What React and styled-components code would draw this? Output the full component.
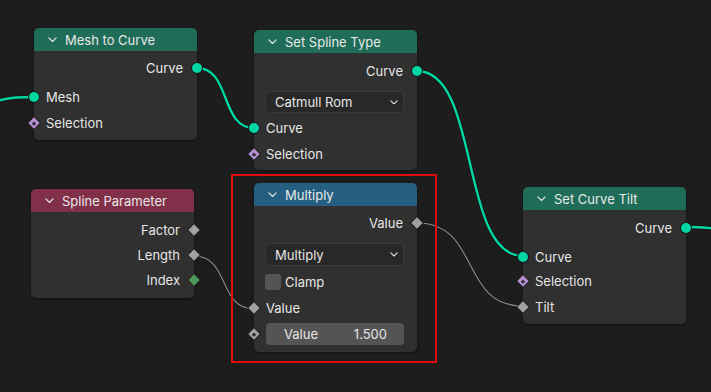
import React from 'react';
import styled, { createGlobalStyle } from 'styled-components';

const GlobalStyle = createGlobalStyle`
  html, body {
    margin: 0;
    padding: 0;
    background: #1d1d1d;
  }
  body {
    font-family: Inter, "Noto Sans", sans-serif;
  }
`;

const Canvas = styled.div`
  position: relative;
  width: 711px;
  height: 392px;
  overflow: hidden;
  background: #1d1d1d;
`;

const Wires = styled.svg`
  position: absolute;
  left: 0;
  top: 0;
`;

const StyledNode = styled.div`
  position: absolute;
  width: 163px;
  background: #303030;
  border-radius: 5px;
  box-shadow: 0 1px 3px rgba(0, 0, 0, 0.45);
  display: flex;
  flex-direction: column;
  padding-bottom: ${(p) => p.$bottom}px;
  color: #e6e6e6;
  font-size: 13px;
`;

const Header = styled.div`
  height: 23px;
  background: ${(p) => p.$color};
  border-radius: 5px 5px 0 0;
  display: flex;
  align-items: center;
  padding-left: 14px;
  gap: 8px;
  color: #e8e8e8;
  font-size: 13px;
`;

const Row = styled.div`
  position: relative;
  height: 22px;
  margin-top: ${(p) => p.$gap}px;
  display: flex;
  align-items: center;
  justify-content: ${(p) => (p.$out ? 'flex-end' : 'flex-start')};
  padding: ${(p) => (p.$out ? '0 14px 0 0' : '0 0 0 12px')};
`;

const Socket = styled.span`
  position: absolute;
  top: 50%;
  ${(p) => (p.$out ? 'right: 0;' : 'left: 0;')}
  transform: ${(p) => (p.$out ? 'translate(50%, -50%)' : 'translate(-50%, -50%)')};
  display: flex;
  align-items: center;
  justify-content: center;
  width: 12px;
  height: 12px;
`;

const Circle = styled.span`
  width: 10px;
  height: 10px;
  border-radius: 50%;
  background: #00d6a3;
  box-shadow: 0 0 0 1px #1a1a1a;
`;

const Diamond = styled.span`
  width: 8px;
  height: 8px;
  transform: rotate(45deg);
  background: ${(p) => p.$color};
  box-shadow: 0 0 0 1px #1c1c1c;
  display: flex;
  align-items: center;
  justify-content: center;
  &::after {
    content: '';
    display: ${(p) => (p.$dot ? 'block' : 'none')};
    width: 3px;
    height: 3px;
    background: #2a2a2a;
  }
`;

const Dropdown = styled.div`
  height: ${(p) => p.$h}px;
  margin: ${(p) => p.$gap}px 13px 0 11px;
  box-sizing: border-box;
  background: #282828;
  border: 1px solid #3a3a3a;
  border-radius: 4px;
  display: flex;
  align-items: center;
  justify-content: space-between;
  padding: 0 5px 0 9px;
  color: #e6e6e6;
`;

const CheckRow = styled.div`
  height: 22px;
  margin: ${(p) => p.$gap}px 0 0 11px;
  display: flex;
  align-items: center;
  gap: 4px;
`;

const CheckBox = styled.span`
  width: 16px;
  height: 16px;
  border-radius: 3px;
  background: #545454;
`;

const Field = styled.div`
  position: relative;
  height: 22px;
  margin: ${(p) => p.$gap}px 13px 0 12px;
  background: #545454;
  border-radius: 4px;
  display: flex;
  align-items: center;
  justify-content: space-between;
  padding: 0 17px 0 18px;
  color: #e6e6e6;
`;

const FieldSocket = styled.span`
  position: absolute;
  left: -12px;
  top: 50%;
  transform: translate(-50%, -50%);
  display: flex;
`;

const Highlight = styled.div`
  position: absolute;
  left: 231px;
  top: 174px;
  width: 206px;
  height: 189px;
  box-sizing: border-box;
  border: 2px solid #e00d0d;
`;

function Chevron({ size = 9, color = '#e0e0e0' }) {
  return (
    <svg width={size} height={size * 0.6} viewBox="0 0 10 6">
      <path d="M1 1 L5 5 L9 1" fill="none" stroke={color} strokeWidth="1.4" strokeLinecap="round" strokeLinejoin="round" />
    </svg>
  );
}

function SocketIcon({ kind }) {
  if (kind === 'geo') return <Circle />;
  if (kind === 'field') return <Diamond $color="#b68fd4" $dot />;
  if (kind === 'int') return <Diamond $color="#4f9a5a" />;
  if (kind === 'floatField') return <Diamond $color="#a1a1a1" $dot />;
  return <Diamond $color="#a1a1a1" />;
}

function Socketed({ label, kind, out, gap }) {
  return (
    <Row $out={out} $gap={gap}>
      {label}
      <Socket $out={out}>
        <SocketIcon kind={kind} />
      </Socket>
    </Row>
  );
}

function Node({ x, y, title, color, bottom, children }) {
  return (
    <StyledNode style={{ left: x, top: y }} $bottom={bottom}>
      <Header $color={color}>
        <Chevron />
        <span>{title}</span>
      </Header>
      {children}
    </StyledNode>
  );
}

function wire(x1, y1, x2, y2) {
  const d = Math.max(Math.abs(x2 - x1) * 0.6, 20);
  return `M${x1} ${y1} C${x1 + d} ${y1} ${x2 - d} ${y2} ${x2} ${y2}`;
}

const geoWires = [
  [-60, 112, 34, 97],
  [197, 68, 254, 128],
  [417, 71, 523, 256],
  [686, 227, 770, 236],
];

const floatWires = [
  [194, 256, 254, 309],
  [417, 223, 523, 306],
];

function App() {
  return (
    <Canvas>
      <GlobalStyle />
      <Wires width="711" height="392">
        {geoWires.map((w, i) => (
          <g key={i}>
            <path d={wire(...w)} fill="none" stroke="#151515" strokeWidth="4" />
            <path d={wire(...w)} fill="none" stroke="#00d6a3" strokeWidth="2.4" />
          </g>
        ))}
        {floatWires.map((w, i) => (
          <g key={i}>
            <path d={wire(...w)} fill="none" stroke="#1a1a1a" strokeWidth="2.4" />
            <path d={wire(...w)} fill="none" stroke="#8e8e8e" strokeWidth="1.1" />
          </g>
        ))}
      </Wires>

      <Node x={34} y={28} title="Mesh to Curve" color="#1f6d58" bottom={6}>
        <Socketed label="Curve" kind="geo" out gap={6} />
        <Socketed label="Mesh" kind="geo" gap={7} />
        <Socketed label="Selection" kind="field" gap={4} />
      </Node>

      <Node x={254} y={30} title="Set Spline Type" color="#1f6d58" bottom={5}>
        <Socketed label="Curve" kind="geo" out gap={7} />
        <Dropdown $h={22} $gap={9}>
          <span>Catmull Rom</span>
          <Chevron size={8} />
        </Dropdown>
        <Socketed label="Curve" kind="geo" gap={4} />
        <Socketed label="Selection" kind="field" gap={4} />
      </Node>

      <Node x={31} y={189} title="Spline Parameter" color="#82304a" bottom={7}>
        <Socketed label="Factor" kind="float" out gap={7} />
        <Socketed label="Length" kind="float" out gap={3} />
        <Socketed label="Index" kind="int" out gap={3} />
      </Node>

      <Node x={254} y={183} title="Multiply" color="#245f82" bottom={7}>
        <Socketed label="Value" kind="float" out gap={6} />
        <Dropdown $h={23} $gap={9}>
          <span>Multiply</span>
          <Chevron size={8} />
        </Dropdown>
        <CheckRow $gap={5}>
          <CheckBox />
          <span>Clamp</span>
        </CheckRow>
        <Socketed label="Value" kind="float" gap={4} />
        <Field $gap={4}>
          <FieldSocket>
            <SocketIcon kind="floatField" />
          </FieldSocket>
          <span>Value</span>
          <span>1.500</span>
        </Field>
      </Node>

      <Node x={523} y={187} title="Set Curve Tilt" color="#1f6d58" bottom={6}>
        <Socketed label="Curve" kind="geo" out gap={7} />
        <Socketed label="Curve" kind="geo" gap={7} />
        <Socketed label="Selection" kind="field" gap={2} />
        <Socketed label="Tilt" kind="float" gap={4} />
      </Node>

      <Highlight />
    </Canvas>
  );
}

export default App;
